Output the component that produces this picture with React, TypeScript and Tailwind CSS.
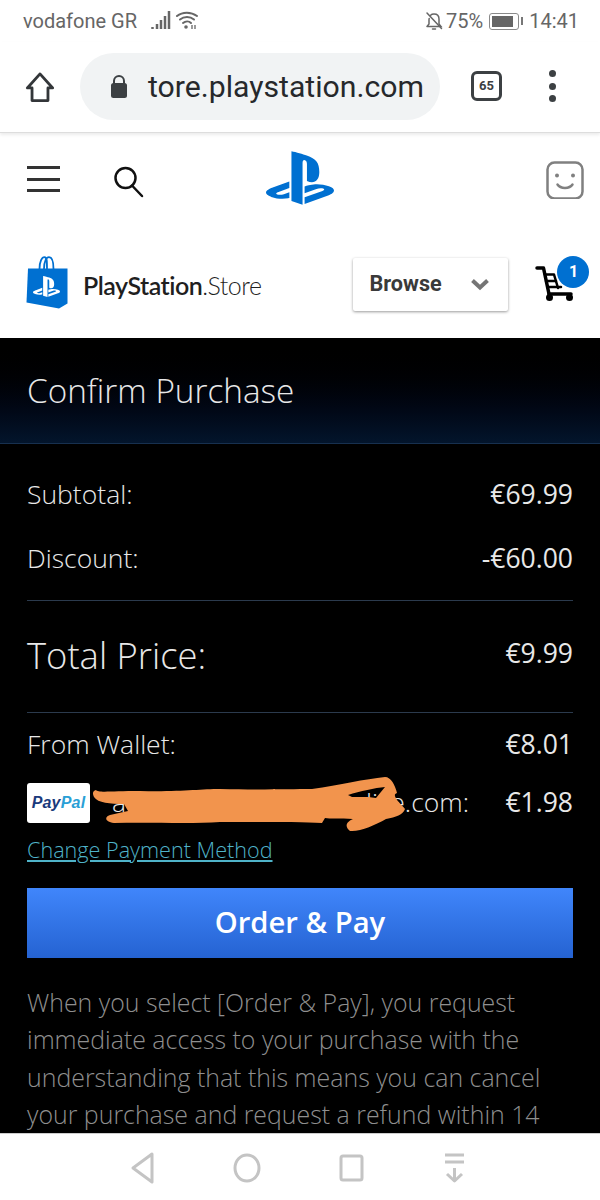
import { SiPlaystation } from "react-icons/si";

const openSans = "font-['Open_Sans',sans-serif]";

function StatusBar() {
  return (
    <div className="flex h-[42px] items-center justify-between pl-[23px] pr-[21px] font-['Roboto',sans-serif] text-[20px] text-[#666666]">
      <div className="flex items-center">
        <span>vodafone GR</span>
        <svg className="ml-[13px]" width="48" height="22" viewBox="0 0 48 22" fill="none">
          <g stroke="#666666" strokeWidth="2.500">
            <path d="M2.500 19v-2" />
            <path d="M7 19v-5" />
            <path d="M11 19v-9" />
            <path d="M15 19v-13" />
            <path d="M19 19v-18" />
          </g>
          <g fill="none" stroke="#666666" strokeWidth="2" strokeLinecap="round">
            <path d="M27 6c5.500-4.500 14-4.500 20 0" />
            <path d="M30 9.500c4-3.300 10-3.300 14 0" />
            <path d="M33 13c2.500-2 6-2 8 0" />
          </g>
          <circle cx="36" cy="17" r="1.800" fill="#666666" />
          <path d="M42 15v4M45 15v4" stroke="#666666" strokeWidth="1.300" />
        </svg>
      </div>
      <div className="flex items-center">
        <svg width="18" height="20" viewBox="0 0 18 20" fill="none" stroke="#666666" strokeWidth="1.500" strokeLinecap="round">
          <path d="M2 15.500h14l-2-2.500V8c0-3-2-5-5-5-1.400 0-2.600.4-3.400 1.200M4.200 7.500C4 8 4 8.500 4 9v4l-2 2.500" />
          <path d="M7.500 18h3" />
          <path d="M2 2l14.500 15.500" />
        </svg>
        <span className="ml-[3px]">75%</span>
        <div className="ml-[6px] flex h-[17px] w-[30px] items-center rounded-[3px] border border-[#8a8a8a] p-[2px]">
          <div className="h-full w-[21px] bg-[#666666]" />
        </div>
        <div className="ml-[2px] h-[8px] w-[2px] bg-[#777777]" />
        <span className="ml-[6px]">14:41</span>
      </div>
    </div>
  );
}

function BrowserBar() {
  return (
    <div className="relative flex h-[91px] items-center border-b border-[#dddddd] pb-[2px] shadow-[0_2px_3px_rgba(0,0,0,0.08)]">
      <svg className="ml-[25px] mt-[1px]" width="30" height="32" viewBox="0 0 32 34" fill="none" stroke="#333639" strokeWidth="3" strokeLinejoin="round">
        <path d="M16 3L2.500 18H7.500V31.500H24.500V18H29.500L16 3Z" />
      </svg>
      <div className="ml-[25px] flex h-[67px] w-[360px] items-center overflow-hidden rounded-full bg-[#f1f3f4]">
        <svg className="ml-[30px] shrink-0" width="18" height="25" viewBox="0 0 18 25" fill="#3c4043">
          <path d="M4 10V7a5 5 0 0 1 10 0v3" fill="none" stroke="#3c4043" strokeWidth="2" />
          <rect x="1" y="9" width="16" height="15" rx="2.500" />
        </svg>
        <span className="ml-[20px] mt-[1px] whitespace-nowrap font-['Roboto',sans-serif] text-[30.200px] text-[#26282b]">tore.playstation.com</span>
      </div>
      <div className="ml-[31px] flex h-[30px] w-[31px] items-center justify-center rounded-[6px] border-[3px] border-[#3c4043] font-['Roboto',sans-serif] text-[13px] font-bold text-[#3c4043]">
        65
      </div>
      <div className="ml-[47px] flex flex-col gap-[5.500px]">
        <div className="h-[7px] w-[7px] rounded-full bg-[#3c4043]" />
        <div className="h-[7px] w-[7px] rounded-full bg-[#3c4043]" />
        <div className="h-[7px] w-[7px] rounded-full bg-[#3c4043]" />
      </div>
    </div>
  );
}

function TopNav() {
  return (
    <div className="flex h-[98px] items-start">
      <div className="ml-[27px] mt-[33px] flex w-[33px] flex-col gap-[8.500px]">
        <div className="h-[3px] bg-[#333333]" />
        <div className="h-[3px] bg-[#333333]" />
        <div className="h-[3px] bg-[#333333]" />
      </div>
      <svg className="ml-[53px] mt-[32px]" width="32" height="33" viewBox="0 0 32 33" fill="none" stroke="#111111" strokeWidth="2.500" strokeLinecap="round">
        <circle cx="12.500" cy="13" r="10" />
        <path d="M19 20.500L29 31" />
      </svg>
      <SiPlaystation className="ml-[121px] mt-[11px] text-[#0070d1]" size={68} />
      <svg className="ml-[212px] mt-[28px]" width="38" height="38" viewBox="0 0 38 38" fill="none">
        <rect x="1.500" y="1.500" width="35" height="36" rx="7" stroke="#808080" strokeWidth="2.500" />
        <circle cx="11" cy="14.500" r="2" fill="#808080" />
        <circle cx="27" cy="14.500" r="2" fill="#808080" />
        <path d="M11.500 23.500c3 4.500 12 4.500 15 0" stroke="#808080" strokeWidth="2.500" strokeLinecap="round" />
      </svg>
    </div>
  );
}

function StoreBag() {
  return (
    <div className="relative h-[53px] w-[42px]">
      <svg width="42" height="53" viewBox="0 0 42 53">
        <path d="M13.500 13C13.500 5 16 1.200 18.500 1.200S21 5 21 13" fill="none" stroke="#0070d1" strokeWidth="1.800" />
        <path d="M18 13C18 5 20.500 1.200 23 1.200S27.500 5 27.500 13" fill="none" stroke="#0070d1" strokeWidth="1.800" />
        <path d="M2 12.500H41.500V47.500L33 52.500L0.500 46.500Z" fill="#0070d1" />
      </svg>
      <SiPlaystation className="absolute left-[7px] top-[17px] text-white" size={27} />
    </div>
  );
}

function CartIcon() {
  return (
    <svg width="40" height="36" viewBox="0 0 40 36" fill="none" stroke="#000000" strokeLinejoin="round" strokeLinecap="round">
      <path d="M2 2H8.500L14 28" strokeWidth="3.500" />
      <path d="M10 8.500H19L23 22" strokeWidth="2.500" />
      <path d="M11 15H21" strokeWidth="2.500" />
      <path d="M13 21H26" strokeWidth="2.500" />
      <path d="M14 28H36" strokeWidth="3.500" />
      <circle cx="14.500" cy="31.500" r="3.500" fill="#000000" strokeWidth="0" />
      <circle cx="34.500" cy="31.500" r="3.500" fill="#000000" strokeWidth="0" />
    </svg>
  );
}

function StoreBar() {
  return (
    <div className="flex h-[107px] items-start">
      <div className="ml-[26px] mt-[25px]">
        <StoreBag />
      </div>
      <div className="ml-[15px] mt-[36px] flex items-baseline whitespace-nowrap font-['Lato',sans-serif] text-[25px] tracking-[-0.500px] text-[#1f1f1f]">
        <span className="font-semibold">PlayStation</span>
        <span className="font-light">.Store</span>
      </div>
      <div className="ml-[92px] mt-[27px] flex h-[53px] w-[155px] items-center justify-between rounded-[2px] bg-white pl-[16px] pr-[18px] font-['Roboto',sans-serif] text-[21.600px] font-bold text-[#3a3a3a] shadow-[0_1px_3px_rgba(0,0,0,0.4)]">
        <span>Browse</span>
        <svg width="20" height="13" viewBox="0 0 20 13" fill="none" stroke="#757575" strokeWidth="4">
          <path d="M2.500 2.500l7.500 7 7.500-7" />
        </svg>
      </div>
      <div className="relative ml-[27px] mt-[25px]">
        <div className="mt-[10px]">
          <CartIcon />
        </div>
        <div className="absolute left-[22px] top-0 flex h-[32px] w-[32px] items-center justify-center rounded-full bg-[#0070d1] font-['Roboto',sans-serif] text-[16px] font-bold text-white">
          1
        </div>
      </div>
    </div>
  );
}

function PriceRow({ label, value, className }: { label: string; value: string; className: string }) {
  return (
    <div className={`flex items-center justify-between ${className}`}>
      <span className="font-light">{label}</span>
      <span>{value}</span>
    </div>
  );
}

// the hand painted blot over the email address, page coords minus (90, 770)
function Scribble() {
  return (
    <svg className="absolute left-[63px] top-[-10px]" width="320" height="64" viewBox="0 0 320 64">
      <path
        fillRule="evenodd"
        fill="#f2944d"
        d="M6 17C8 20 20 18 50 18C90 19 110 16 130 16C170 17 200 16 222 16C250 12 275 6 295 4C301 4 305 12 307 20C300 22 312 32 315 36C313 42 306 44 296 46C285 52 270 59 260 58C256 55 254 50 263 46C250 45 240 46 235 45L232 50C210 49 170 49 130 49C100 51 60 49 24 50C15 49 14 44 20 42L38 38L34 31C20 31 8 30 4 24C2 20 3 18 6 17ZM258 22L262 24L278 24L286 25L295 14C285 15 270 18 258 22Z"
      />
    </svg>
  );
}

function PurchasePanel() {
  return (
    <div className={`flex-1 overflow-hidden bg-black text-white ${openSans}`}>
      <div className="flex h-[106px] items-center border-b border-[#17304f] bg-gradient-to-b from-[#000000] to-[#03152c] pl-[27px] text-[33.300px] font-light text-[#e8e8e8]">
        Confirm Purchase
      </div>
      <div className="px-[27px] text-[26.500px] text-[#e8e8e8]">
        <PriceRow label="Subtotal:" value="€69.99" className="mt-[28px] h-[46px]" />
        <PriceRow label="Discount:" value="-€60.00" className="mt-[18px] h-[46px]" />
        <div className="mt-[18px] h-px bg-[#2b3a4d]" />
        <div className="mt-[25px] flex h-[58px] items-center justify-between">
          <span className="text-[36.400px] font-light">Total Price:</span>
          <span className="mb-[2px]">€9.99</span>
        </div>
        <div className="mt-[28px] h-px bg-[#2b3a4d]" />
        <PriceRow label="From Wallet:" value="€8.01" className="mt-[12px] h-[40px]" />
        <div className="relative mt-[18px] flex h-[40px] items-center justify-between">
          <div className="flex h-[40px] w-[63px] items-center justify-center rounded-[3px] bg-white font-['Liberation_Sans',sans-serif] text-[16px] font-bold italic tracking-[0.200px]">
            <span className="text-[#1a3a7c]">Pay</span>
            <span className="text-[#2a9fd6]">Pal</span>
          </div>
          <span className="absolute left-[85px] font-light">a</span>
          <span className="absolute right-[104px] font-light">live.com:</span>
          <Scribble />
          <span>€1.98</span>
        </div>
        <div className="mt-[10px] h-[34px] text-[21.600px] font-light leading-[34px] text-[#4fb3c9] underline underline-offset-2">
          Change Payment Method
        </div>
        <div className="mt-[21px] flex h-[70px] items-center justify-center bg-gradient-to-b from-[#4086fb] to-[#2563d2] text-[29.200px] font-semibold text-white">
          Order &amp; Pay
        </div>
        <p className="mt-[26px] whitespace-nowrap text-[24.900px] font-light leading-[37.400px] text-[#8f8f8f]">
          When you select [Order &amp; Pay], you request
          <br />
          immediate access to your purchase with the
          <br />
          understanding that this means you can cancel
          <br />
          your purchase and request a refund within 14
        </p>
      </div>
    </div>
  );
}

function BottomNav() {
  return (
    <div className="flex h-[67px] items-center justify-center border-t border-[#cccccc] bg-white pb-[1px]">
      <svg width="400" height="36" viewBox="0 0 400 36" fill="none" stroke="#c4c4c4" strokeWidth="3" strokeLinejoin="round">
        <path d="M52 5L33 19L52 33Z" />
        <ellipse cx="147" cy="19" rx="12" ry="13" />
        <rect x="241" y="7" width="21" height="24" rx="2" />
        <path d="M345 6H364M345 13H364M354.500 19V32M347 25L354.500 32L362 25" />
      </svg>
    </div>
  );
}

export default function App() {
  return (
    <div className="flex h-[1200px] w-[600px] flex-col overflow-hidden bg-white">
      <StatusBar />
      <BrowserBar />
      <TopNav />
      <StoreBar />
      <PurchasePanel />
      <BottomNav />
    </div>
  );
}
